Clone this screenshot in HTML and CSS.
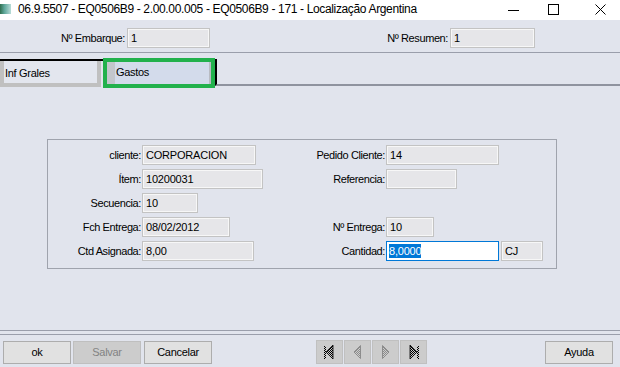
FILE: index.html
```html
<!DOCTYPE html>
<html lang="pt">
<head>
    <meta charset="UTF-8">
    <title>Localização Argentina</title>
    <link rel="stylesheet" href="styles.css">
</head>
<body>

<div class="win">
    <div class="titlebar">
        <span class="appicon"></span>
        <span class="title">06.9.5507 - EQ0506B9 - 2.00.00.005 - EQ0506B9 - 171 - Localização Argentina</span>
        <div class="ctrls">
            <svg class="ctl ctl-min" width="12" height="12" viewBox="0 0 12 12"><path d="M0 6.5h11" stroke="#000" stroke-width="1"/></svg>
            <svg class="ctl ctl-max" width="12" height="12" viewBox="0 0 12 12"><rect x="0.5" y="0.5" width="10" height="10" fill="none" stroke="#000"/></svg>
            <svg class="ctl ctl-close" width="12" height="12" viewBox="0 0 12 12"><path d="M0.5 0.5l10 10M10.5 0.5l-10 10" stroke="#000" stroke-width="1"/></svg>
        </div>
    </div>

    <div class="hdr">
        <div class="fld fld-emb">
            <label>Nº Embarque:</label>
            <span class="box w-emb">1</span>
        </div>
        <div class="fld fld-res">
            <label>Nº Resumen:</label>
            <span class="box w-res">1</span>
        </div>
    </div>

    <div class="tabs">
        <div class="tab"><span class="tab-in">Inf Grales</span></div>
        <div class="tab active"><span class="tab-in">Gastos</span></div>
        <div class="tab-rest"></div>
    </div>

    <div class="main">
        <div class="group">
            <label>cliente:</label>
            <div class="cell"><span class="box w-cli">CORPORACION</span></div>
            <label>Pedido Cliente:</label>
            <div class="cell"><span class="box w-ped">14</span></div>

            <label>Ítem:</label>
            <div class="cell"><span class="box w-item">10200031</span></div>
            <label>Referencia:</label>
            <div class="cell"><span class="box w-ref"></span></div>

            <label>Secuencia:</label>
            <div class="cell"><span class="box w-sec">10</span></div>
            <span></span>
            <span></span>

            <label>Fch Entrega:</label>
            <div class="cell"><span class="box w-fch">08/02/2012</span></div>
            <label>Nº Entrega:</label>
            <div class="cell"><span class="box w-nent">10</span></div>

            <label>Ctd Asignada:</label>
            <div class="cell"><span class="box w-ctd">8,00</span></div>
            <label>Cantidad:</label>
            <div class="cell">
                <span class="box focus w-cant"><span class="sel">8,0000</span></span>
                <span class="box w-cj">CJ</span>
            </div>
        </div>
    </div>

    <div class="foot">
        <div class="foot-in">
            <div class="btns">
                <button class="btn">ok</button>
                <button class="btn" disabled>Salvar</button>
                <button class="btn">Cancelar</button>
            </div>
            <div class="nav">
                <svg width="25" height="22" viewBox="0 0 25 22">
                    <defs>
                        <pattern id="dk" width="2" height="2" patternUnits="userSpaceOnUse"><rect width="1" height="1" fill="#000"/><rect x="1" y="1" width="1" height="1" fill="#000"/></pattern>
                        <pattern id="gr" width="2" height="2" patternUnits="userSpaceOnUse"><rect width="1" height="1" fill="#8c8c8c"/><rect x="1" y="1" width="1" height="1" fill="#8c8c8c"/></pattern>
                    </defs>
                    <rect x="7" y="5" width="2" height="13" fill="url(#dk)"/>
                    <path d="M16 4v14l-7-7z" fill="url(#dk)" stroke="#000" stroke-width="0.8"/>
                </svg>
                <svg width="25" height="22" viewBox="0 0 25 22">
                    <path d="M15.5 4.5v13l-6.5-6.5z" fill="url(#gr)" stroke="#8c8c8c" stroke-width="1"/>
                </svg>
                <svg width="25" height="22" viewBox="0 0 25 22">
                    <path d="M9.5 4.5v13l6.5-6.5z" fill="url(#gr)" stroke="#8c8c8c" stroke-width="1"/>
                </svg>
                <svg width="25" height="22" viewBox="0 0 25 22">
                    <path d="M9 4v14l7-7z" fill="url(#dk)" stroke="#000" stroke-width="0.8"/>
                    <rect x="16" y="5" width="2" height="13" fill="url(#dk)"/>
                </svg>
            </div>
            <button class="btn btn-help">Ayuda</button>
        </div>
    </div>
</div>

</body>
</html>
```

FILE: styles.css
```css
body {
    margin: 0;
    font-family: "Liberation Sans", Arial, sans-serif;
    font-size: 11px;
    color: #000;
    background-color: #e1e4ed;
}
.win {
    width: 620px;
    height: 367px;
    overflow: hidden;
}

/* barra de titulo */
.titlebar {
    height: 20px;
    background-color: #fff;
    display: flex;
    align-items: center;
}
.appicon {
    width: 11px;
    height: 10px;
    margin-left: 0;
    margin-top: -2px;
    background: linear-gradient(90deg, #2f6f4f 0%, #5fa79a 40%, #b9dcd8 100%);
}
.title {
    margin-left: 7px;
    margin-top: -2px;
    font-size: 12px;
    letter-spacing: -0.35px;
}
.ctrls {
    margin-left: auto;
    display: flex;
    align-items: center;
    margin-top: -1px;
}
.ctl-min { margin-right: 28px; }
.ctl-max { margin-right: 35px; }
.ctl-close { margin-right: 13px; }

/* cabecalho */
.hdr {
    height: 32px;
    border-bottom: 1px solid #9a9eab;
    display: flex;
    align-items: flex-start;
}
.fld {
    display: flex;
    align-items: center;
    margin-top: 8px;
}
.fld label {
    text-align: right;
    letter-spacing: -0.4px;
    padding-right: 2px;
}
.fld-emb label { width: 125px; }
.fld-res label { width: 238px; }

.box {
    display: inline-flex;
    align-items: center;
    box-sizing: border-box;
    height: 20px;
    padding-left: 3px;
    border: 1px solid #c3c3c3;
    box-shadow: inset 0 0 0 1px #f7f7f7;
    background-color: #e6e6e9;
    white-space: nowrap;
    letter-spacing: -0.2px;
}
.box.focus {
    border-color: #0078d7;
    box-shadow: none;
    background-color: #fff;
    padding-left: 2px;
}
.sel {
    background-color: #0078d7;
    color: #fff;
    line-height: 14px;
}
.w-emb { width: 83px; }
.w-res { width: 85px; }
.w-cli { width: 114px; }
.w-item { width: 121px; }
.w-sec { width: 56px; }
.w-fch { width: 88px; }
.w-ctd { width: 112px; }
.w-ped { width: 113px; }
.w-ref { width: 71px; }
.w-nent { width: 48px; }
.w-cant { width: 113px; }
.w-cj { width: 42px; margin-left: 2px; }

/* abas */
.tabs {
    height: 35px;
    display: flex;
    align-items: flex-start;
    padding-top: 6px;
    box-sizing: border-box;
}
.tab {
    box-sizing: border-box;
    height: 28px;
    border-top: 2px solid #000;
}
.tab-in {
    display: block;
    box-sizing: border-box;
    height: 100%;
    padding-top: 6px;
    letter-spacing: -0.3px;
}
.tab:first-child {
    width: 103px;
}
.tab:first-child .tab-in {
    width: 101px;
    height: 26px;
    border: 4px solid #c0c0c0;
    border-top: none;
    padding-left: 1px;
    background-color: #e3e6ee;
}
.tab.active {
    width: 112px;
    height: 30px;
    margin-top: -1px;
    border: 4px solid #22b14c;
}
.tab.active .tab-in {
    background-color: #d3dbeb;
    border-left: 8px solid #c3c6cc;
    border-right: 2px solid #b8bbc2;
    padding-top: 4px;
    padding-left: 1px;
}
.tab-rest {
    flex: 1;
    height: 25px;
    border-left: 2px solid #000;
    border-bottom: 2px solid #8f939f;
}

/* area principal */
.main {
    height: 242px;
    box-sizing: border-box;
    padding-top: 51px;
    padding-left: 47px;
}
.group {
    width: 510px;
    height: 130px;
    box-sizing: border-box;
    border: 1px solid #9fa3ad;
    display: grid;
    grid-template-columns: 94px 151px 93px auto;
    grid-template-rows: repeat(5, 20px);
    row-gap: 4px;
    padding-top: 5px;
    align-items: center;
}
.group label {
    text-align: right;
    padding-right: 1px;
    letter-spacing: -0.4px;
}
.cell {
    display: flex;
}

/* rodape */
.foot {
    border-top: 1px solid #9a9eab;
    padding-top: 3px;
}
.foot-in {
    border-top: 1px solid #9a9eab;
    border-bottom: 2px solid #9a9eab;
    padding: 5px 0 3px 3px;
    display: flex;
    align-items: center;
}
.btns {
    display: flex;
    gap: 2px;
}
.btn {
    width: 68px;
    height: 23px;
    box-sizing: border-box;
    font-family: "Liberation Sans", Arial, sans-serif;
    font-size: 11px;
    letter-spacing: -0.3px;
    color: #000;
    background-color: #e1e1e1;
    border: 1px solid #adadad;
    padding: 0;
}
.btn:disabled {
    background-color: #cccccc;
    color: #838383;
    border-color: #bfbfbf;
}
.btns .btn:last-child {
    margin-left: 1px;
}
.nav {
    display: flex;
    gap: 1px;
    margin-left: 104px;
}
.nav svg {
    background-color: #cccccc;
    border: 1px solid #c0c0c0;
}
.btn-help {
    margin-left: auto;
    margin-right: 7px;
}
```
